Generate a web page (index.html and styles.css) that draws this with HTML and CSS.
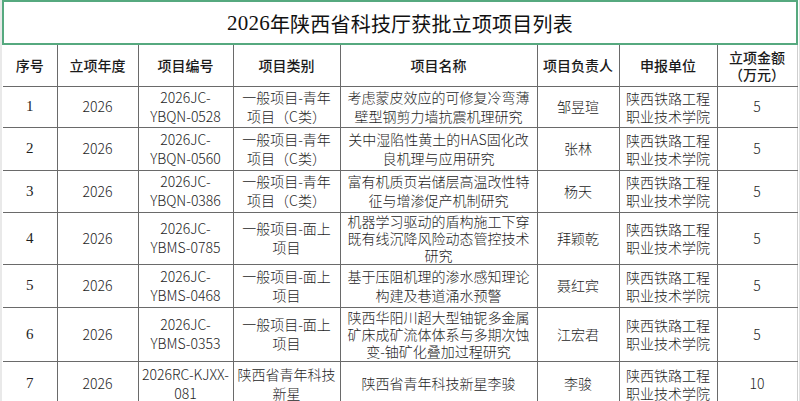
FILE: index.html
```html
<!DOCTYPE html>
<html lang="zh-CN">
<head>
<meta charset="utf-8">
<title>2026年陕西省科技厅获批立项项目列表</title>
<link rel="stylesheet" href="styles.css">
</head>
<body>
<div class="sheet">
  <div class="title"><span class="num">2026</span>年陕西省科技厅获批立项项目列表</div>
  <table class="grid">
    <colgroup>
      <col class="c1"><col class="c2"><col class="c3"><col class="c4">
      <col class="c5"><col class="c6"><col class="c7"><col class="c8">
    </colgroup>
    <thead>
      <tr class="h41">
        <th>序号</th><th>立项年度</th><th>项目编号</th><th>项目类别</th>
        <th>项目名称</th><th>项目负责人</th><th>申报单位</th><th class="amt">立项金额<br>（万元）</th>
      </tr>
    </thead>
    <tbody>
      <tr class="h41">
        <td class="seq">1</td><td>2026</td><td>2026JC-<br>YBQN-0528</td><td>一般项目-青年<br>项目（C类）</td>
        <td class="name">考虑蒙皮效应的可修复冷弯薄<br>壁型钢剪力墙抗震机理研究</td><td class="person">邹昱瑄</td>
        <td class="unit">陕西铁路工程<br>职业技术学院</td><td>5</td>
      </tr>
      <tr class="h43">
        <td class="seq">2</td><td>2026</td><td>2026JC-<br>YBQN-0560</td><td>一般项目-青年<br>项目（C类）</td>
        <td class="name">关中湿陷性黄土的HAS固化改<br>良机理与应用研究</td><td class="person">张林</td>
        <td class="unit">陕西铁路工程<br>职业技术学院</td><td>5</td>
      </tr>
      <tr class="h42">
        <td class="seq">3</td><td>2026</td><td>2026JC-<br>YBQN-0386</td><td>一般项目-青年<br>项目（C类）</td>
        <td class="name">富有机质页岩储层高温改性特<br>征与增渗促产机制研究</td><td class="person">杨天</td>
        <td class="unit">陕西铁路工程<br>职业技术学院</td><td>5</td>
      </tr>
      <tr class="h51">
        <td class="seq">4</td><td>2026</td><td>2026JC-<br>YBMS-0785</td><td>一般项目-面上<br>项目</td>
        <td class="name tight">机器学习驱动的盾构施工下穿<br>既有线沉降风险动态管控技术<br>研究</td><td class="person">拜颖乾</td>
        <td class="unit">陕西铁路工程<br>职业技术学院</td><td>5</td>
      </tr>
      <tr class="h43">
        <td class="seq">5</td><td>2026</td><td>2026JC-<br>YBMS-0468</td><td>一般项目-面上<br>项目</td>
        <td class="name">基于压阻机理的渗水感知理论<br>构建及巷道涌水预警</td><td class="person">聂红宾</td>
        <td class="unit">陕西铁路工程<br>职业技术学院</td><td>5</td>
      </tr>
      <tr class="h54">
        <td class="seq">6</td><td>2026</td><td>2026JC-<br>YBMS-0353</td><td>一般项目-面上<br>项目</td>
        <td class="name tight">陕西华阳川超大型铀铌多金属<br>矿床成矿流体体系与多期次蚀<br>变-铀矿化叠加过程研究</td><td class="person">江宏君</td>
        <td class="unit">陕西铁路工程<br>职业技术学院</td><td>5</td>
      </tr>
      <tr class="h45">
        <td class="seq">7</td><td>2026</td><td>2026RC-KJXX-<br>081</td><td>陕西省青年科技<br>新星</td>
        <td class="name">陕西省青年科技新星李骏</td><td class="person">李骏</td>
        <td class="unit">陕西铁路工程<br>职业技术学院</td><td>10</td>
      </tr>
    </tbody>
  </table>
</div>
</body>
</html>
```

FILE: styles.css
```css
html, body {
  margin: 0;
  padding: 0;
  background: #ffffff;
}

body {
  font-family: "Noto Sans CJK SC", "Noto Sans", sans-serif;
  color: #1e1e1e;
  overflow: hidden;
}

.sheet {
  width: 797px;
  height: 401px;
  border-left: 2px solid #e9e9e9;
  border-right: 1px solid #e2e2e2;
  box-sizing: content-box;
  overflow: hidden;
}

.title {
  box-sizing: border-box;
  width: 796px;
  height: 45px;
  border: 2px solid #56a97f;
  display: flex;
  align-items: center;
  justify-content: center;
  font-size: 20px;
  font-weight: 400;
  color: #111111;
  letter-spacing: 0.2px;
  padding-top: 1px;
}

.title .num {
  font-family: "Liberation Serif", serif;
  font-size: 21px;
  font-weight: 400;
}

.grid {
  margin-left: 1px;
  width: 794px;
  table-layout: fixed;
  border-collapse: collapse;
}

.c1 { width: 54px; }
.c2 { width: 81px; }
.c3 { width: 95px; }
.c4 { width: 107px; }
.c5 { width: 197px; }
.c6 { width: 82px; }
.c7 { width: 98px; }
.c8 { width: 80px; }

.grid th,
.grid td {
  border: 1px solid #6a6a6a;
  padding: 0 2px;
  text-align: center;
  vertical-align: middle;
  font-size: 14px;
  line-height: 19px;
  white-space: nowrap;
  overflow: hidden;
}

.grid td {
  font-weight: 300;
}

.grid tr > :first-child { border-left: none; }
.grid tr > :last-child { border-right: 1px solid #cfcfcf; }
.grid thead th { border-top: none; }

.grid th {
  font-weight: 500;
  color: #1a1a1a;
}

.grid th.amt {
  line-height: 17px;
  padding-top: 1px;
}

.grid td.seq {
  font-family: "Liberation Serif", serif;
  font-size: 15px;
  font-weight: 400;
}

.grid td.name.tight {
  line-height: 17px;
}

.grid td.unit {
  line-height: 18px;
}

.h41 { height: 41px; }
.h42 { height: 42px; }
.h43 { height: 43px; }
.h45 { height: 45px; }
.h51 { height: 51px; }
.h54 { height: 54px; }
```
